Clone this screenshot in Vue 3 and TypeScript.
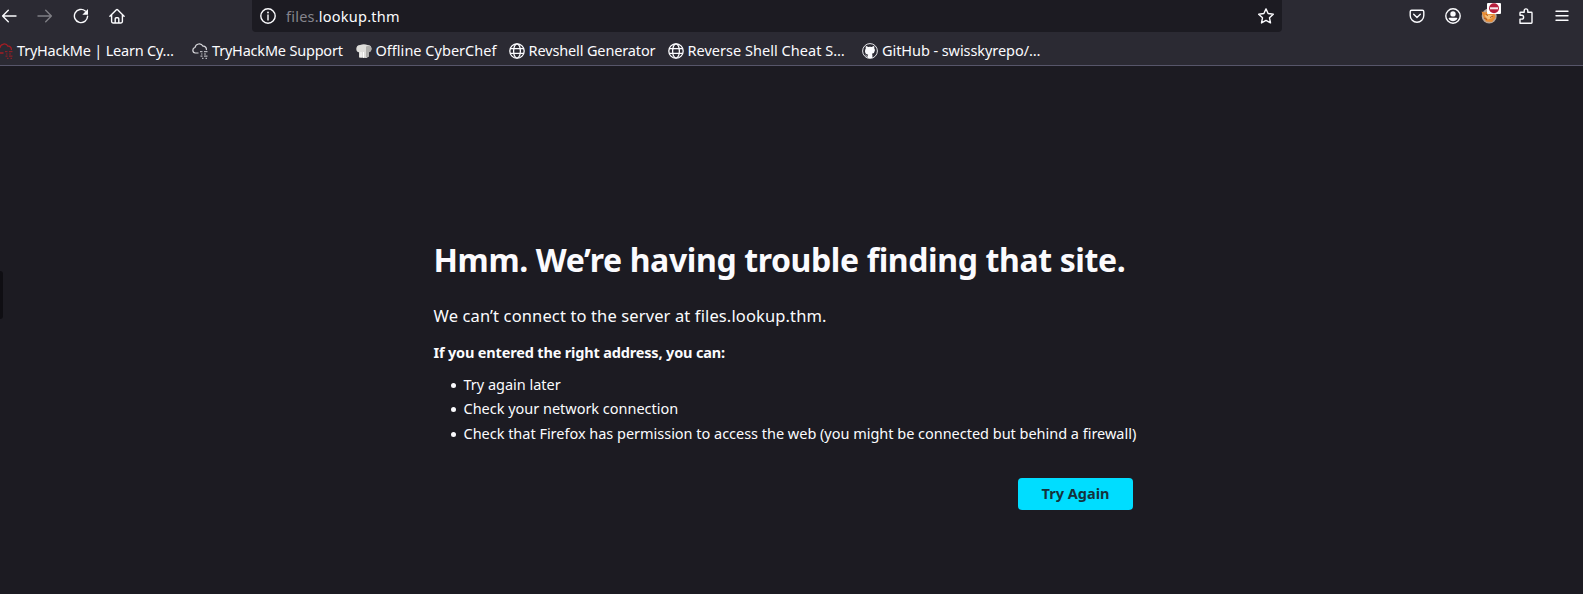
<script setup lang="ts">
interface Bookmark {
  label: string
  icon: 'cloudRed' | 'cloud' | 'chef' | 'globe' | 'github'
  slot: number
  spacing: number
}

const bookmarks: Bookmark[] = [
  { label: 'TryHackMe | Learn Cy…', icon: 'cloudRed', slot: 195, spacing: -0.21 },
  { label: 'TryHackMe Support', icon: 'cloud', slot: 163.5, spacing: -0.2 },
  { label: 'Offline CyberChef', icon: 'chef', slot: 153, spacing: 0.02 },
  { label: 'Revshell Generator', icon: 'globe', slot: 159, spacing: -0.13 },
  { label: 'Reverse Shell Cheat S…', icon: 'globe', slot: 194.5, spacing: 0.03 },
  { label: 'GitHub - swisskyrepo/…', icon: 'github', slot: 180, spacing: -0.07 },
]

const tips: string[] = [
  'Try again later',
  'Check your network connection',
  'Check that Firefox has permission to access the web (you might be connected but behind a firewall)',
]
</script>

<template>
  <div class="browser">
    <header class="chrome">
      <div class="toolbar">
        <nav class="nav">
          <svg class="ico" viewBox="0 0 16 16"><path d="M15 8H1.6M7.3 2.3 1.6 8l5.7 5.7" /></svg>
          <svg class="ico dim" viewBox="0 0 16 16"><path d="M1 8h13.4M8.7 2.3 14.4 8l-5.7 5.7" /></svg>
          <svg class="ico" viewBox="0 0 16 16">
            <path d="M14.6 8.3A6.6 6.6 0 1 1 12.3 3" />
            <path class="solid" d="M15 .9v5.3a.5.5 0 0 1-.5.5H9.3z" />
          </svg>
          <svg class="ico" viewBox="0 0 16 16">
            <path d="M.9 8.2 7.4 1.7q.6-.6 1.2 0L15.100 8.200M2.600 7v6.600q0 1.400 1.400 1.400h8q1.400 0 1.400-1.400V7M6.200 15v-4.200q0-1 1-1h1.600q1 0 1 1V15" />
          </svg>
        </nav>
        <div class="url">
          <svg class="ico" viewBox="0 0 16 16">
            <circle cx="8" cy="8" r="7.2" />
            <path d="M8 7v5" />
            <circle class="solid" cx="8" cy="4.5" r=".9" />
          </svg>
          <span class="address"><span class="sub">files.</span>lookup.thm</span>
          <svg class="ico star" viewBox="0 0 16 16">
            <path d="M8 .9 10.1 5.5 15.3 6.2 11.5 9.8 12.5 14.9 8 12.4 3.5 14.9 4.5 9.8 .7 6.2 5.9 5.5z" />
          </svg>
        </div>
        <div class="tools">
          <svg class="ico" viewBox="0 0 16 16">
            <path d="M2.6 2.3h10.8q1.4 0 1.4 1.4v3.7a6.8 6.8 0 0 1-13.6 0V3.7q0-1.4 1.4-1.4zM4.7 6.3 8 9.4l3.3-3.1" />
          </svg>
          <svg class="ico" viewBox="0 0 16 16">
            <circle cx="8" cy="8" r="7.2" />
            <circle class="solid" cx="8" cy="5.9" r="2.7" />
            <path class="solid" d="M4.5 9.8h7q1 0 .8.9a5 5 0 0 1-8.6 0q-.2-.9.8-.9z" />
          </svg>
          <span class="extension">
            <svg class="fox" viewBox="0 0 16 16">
              <circle cx="8.2" cy="8" r="7.5" fill="#b9a79a" />
              <path d="M.5 3.500 4 4.500 8 3l5 1.500 1.500 5L11 14l-6-.5L2.500 9z" fill="#e88d35" />
              <path d="M3.500 7.500 7 6.500l5 1-1 2.500-4 1.500z" fill="#f6c27d" />
              <path d="M5 6.500l2 1M9 9.500l3-1.500M3 10l3 1.500" stroke="#a8531e" stroke-width="1" />
            </svg>
            <svg class="badge" viewBox="0 0 14 11">
              <rect width="14" height="11" rx="1" fill="#fff" />
              <circle cx="7" cy="5.3" r="5" fill="#b71f3d" />
              <rect x="3" y="4.3" width="8" height="2" fill="#f6e8ec" />
            </svg>
          </span>
          <svg class="ico" viewBox="0 0 16 16">
            <path d="M2 15.200v-4.100h1.700a1.900 1.900 0 0 0 0-3.800H2V4.900q0-.7.700-.7h3.500V2.700a1.800 1.800 0 0 1 3.600 0v1.500h3.500q.7 0 .7.700v9.600q0 .7-.7.700z" />
          </svg>
          <svg class="ico" viewBox="0 0 16 16"><path d="M2 3.200h12M2 7.700h12M2 12.200h12" /></svg>
        </div>
      </div>

      <div class="bookmarks">
        <div v-for="b in bookmarks" :key="b.label" class="bookmark" :style="{ width: b.slot + 'px' }">
          <svg v-if="b.icon === 'cloudRed' || b.icon === 'cloud'" class="fav" :class="b.icon" viewBox="0 0 16 16">
            <path d="M6.500 10H3.300A2.800 2.800 0 0 1 3 4.500 4.300 4.300 0 0 1 11 3.200 3.100 3.100 0 0 1 14.300 7" />
            <path class="bits" d="M8 8.700h2.500M12 8.700h3.500M9 11h1.500M12 11h2M8.500 13.200h2M12 13.200h3.500M10 15.300h1.500M13.500 15.300h1.500" />
          </svg>
          <svg v-else-if="b.icon === 'chef'" class="fav chef" viewBox="0 0 16 16">
            <path d="M3 14.500V9.300Q.3 8.800.3 5.700.5 2.300 4 2q4-1.700 7.500 0 4 .2 4 3.700 0 3-2.500 3.600v3.900L10.500 15z" fill="#deddda" />
            <path d="M10 3.500v11l3-1.300V9.300Q15.500 8.700 15.500 5.500 15 3 12.500 2.700z" fill="#aeadab" />
            <path d="M5 9v5.500M7.500 9v5.800" stroke="#fff" stroke-width="1" />
          </svg>
          <svg v-else-if="b.icon === 'globe'" class="fav globe" viewBox="0 0 16 16">
            <circle cx="8" cy="8" r="7.2" />
            <ellipse cx="8" cy="8" rx="3.4" ry="7.2" />
            <path d="M1.300 5.600h13.400M1.300 10.400h13.400" />
          </svg>
          <svg v-else class="fav github" viewBox="0 0 16 16">
            <circle cx="8" cy="8" r="7.4" />
            <path d="M3.900 3.100q1.100 0 2.200.8 1.900-.4 3.800 0 1.100-.8 2.200-.8.500 1.100.1 2.100.8 1 .7 2.400-.2 2.700-3 3.200.5.600.5 1.400v2.900H5.700v-1.600q-1.500.3-2.200-1.200l-.6-.7q1 0 1.500 1 .6.500 1.300.200.100-.7.500-1.100-3.200-.5-3.200-3.500 0-1.700.800-2.700-.3-1.200.1-2.400z" />
          </svg>
          <span class="label" :style="{ letterSpacing: b.spacing + 'px' }">{{ b.label }}</span>
        </div>
      </div>
    </header>

    <main class="page">
      <section class="error">
        <h1>Hmm. We’re having trouble finding that site.</h1>
        <p class="lead">We can’t connect to the server at files.lookup.thm.</p>
        <p class="hint">If you entered the right address, you can:</p>
        <ul>
          <li v-for="tip in tips" :key="tip">{{ tip }}</li>
        </ul>
        <button type="button">Try Again</button>
      </section>
      <span class="edge"></span>
    </main>
  </div>
</template>

<style>
body {
  margin: 0;
  overflow: hidden;
  background: #1c1b22;
}
</style>

<style scoped>
.browser {
  width: 1583px;
  height: 594px;
  display: flex;
  flex-direction: column;
  overflow: hidden;
  background: #1c1b22;
  color: #fbfbfe;
  font: 14.5px/22px "Noto Sans", "Open Sans", sans-serif;
}
.chrome {
  box-sizing: border-box;
  height: 66px;
  flex: none;
  background: #2b2a33;
  border-bottom: 1px solid #57566a;
}
.toolbar {
  height: 32px;
  display: flex;
  align-items: center;
}
.nav {
  width: 251px;
  display: flex;
  gap: 20px;
  padding-left: 1px;
  box-sizing: border-box;
}
.ico {
  display: block;
  width: 16px;
  height: 16px;
  flex: none;
  fill: none;
  stroke: #fbfbfe;
  stroke-width: 1.4;
  stroke-linecap: round;
  stroke-linejoin: round;
}
.solid {
  fill: #fbfbfe;
  stroke: none;
}
.dim {
  opacity: 0.4;
}
.url {
  box-sizing: border-box;
  width: 1030px;
  height: 32px;
  margin-left: 1px;
  padding: 0 8px 0 7.5px;
  display: flex;
  align-items: center;
  background: #1c1b22;
  border-radius: 0 0 4px 4px;
}
.address {
  flex: 1;
  margin-left: 10.5px;
  letter-spacing: 0.23px;
}
.sub {
  color: #85848c;
}
.tools {
  display: flex;
  gap: 20.2px;
  margin-left: 127px;
}
.extension {
  position: relative;
  width: 16px;
  height: 16px;
}
.fox {
  display: block;
  width: 16px;
  height: 16px;
}
.badge {
  position: absolute;
  left: 6px;
  top: -5px;
  width: 14px;
  height: 11px;
}
.bookmarks {
  display: flex;
  align-items: center;
  height: 33px;
  margin: 2px 0 0 -3px;
}
.bookmark {
  flex: none;
  display: flex;
  align-items: center;
  gap: 4px;
  white-space: nowrap;
}
.label {
  margin-bottom: 2px;
}
.fav {
  width: 16px;
  height: 16px;
  flex: none;
  fill: none;
  stroke: #fbfbfe;
  stroke-width: 1.3;
}
.cloudRed {
  stroke: #a51d24;
}
.cloud {
  stroke: #d8d8dc;
  stroke-width: 1.2;
}
.bits {
  stroke-width: 1.2;
  opacity: 0.8;
}
.chef {
  stroke: none;
}
.github circle {
  stroke-width: 0.9;
}
.github path {
  fill: #fbfbfe;
  stroke: none;
}
.page {
  position: relative;
  flex: 1;
  padding: 172px 0 0 433.5px;
}
.error {
  width: 704px;
  display: flex;
  flex-direction: column;
}
h1 {
  margin: 0;
  font-size: 32px;
  line-height: 44px;
  font-weight: 700;
  letter-spacing: -0.38px;
  white-space: nowrap;
}
.lead {
  margin: 22px 0 0;
  font-size: 16.5px;
  line-height: 24px;
  letter-spacing: 0.127px;
}
.hint {
  margin: 13px 0 0;
  font-weight: 700;
  letter-spacing: -0.17px;
}
ul {
  margin: 9px 0 0;
  padding: 0;
  list-style: none;
  line-height: 24px;
  letter-spacing: -0.02px;
  white-space: nowrap;
}
li {
  display: flex;
  align-items: center;
}
li:last-child {
  margin-top: 1px;
}
li::before {
  content: "";
  width: 5px;
  height: 5px;
  margin: 2px 8px 0 17px;
  border-radius: 50%;
  background: #fbfbfe;
}
button {
  align-self: flex-end;
  width: 115px;
  height: 32px;
  margin: 33px 4.5px 0 0;
  padding: 0 0 2px;
  border: 0;
  border-radius: 4px;
  background: #00ddff;
  color: #15323c;
  font: 700 14.5px/22px "Noto Sans", "Open Sans", sans-serif;
}
.edge {
  position: absolute;
  left: 0;
  top: 205px;
  width: 3px;
  height: 48px;
  background: #0f0e13;
  border-radius: 0 3px 3px 0;
}
</style>
